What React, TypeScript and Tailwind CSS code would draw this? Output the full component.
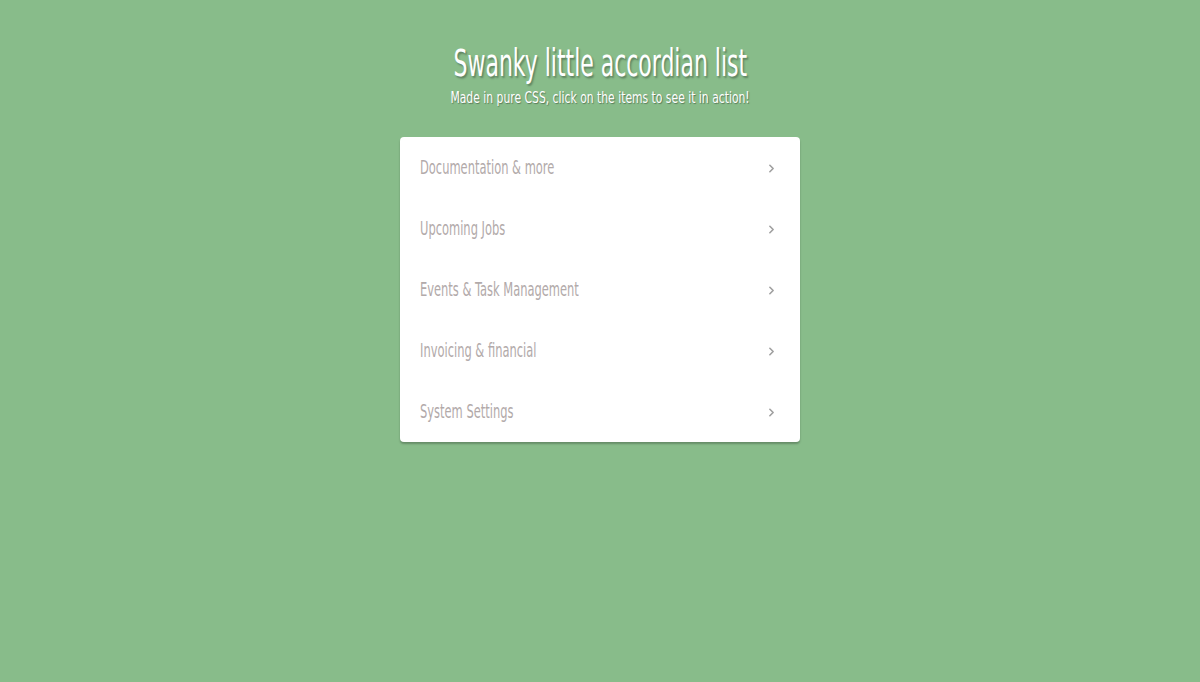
import { ChevronRight } from "lucide-react";

const items = [
  "Documentation & more",
  "Upcoming Jobs",
  "Events & Task Management",
  "Invoicing & financial",
  "System Settings",
];

export default function App() {
  return (
    <div className="min-h-[682px] w-full bg-[#88bc8a] font-['DejaVu_Sans_Condensed','DejaVu_Sans',sans-serif]">
      <div className="flex flex-col items-center pt-[42px]">
        <h1 className="text-[33px] leading-[42px] text-white [text-shadow:2px_2px_2px_rgba(0,0,0,0.3)] [transform:scale(0.74,1.15)]">
          Swanky little accordian list
        </h1>
        <p className="mt-[3px] text-[15px] leading-[20px] text-white [text-shadow:1px_1px_1px_rgba(0,0,0,0.35)] [transform:scale(0.8,1.1)]">
          Made in pure CSS, click on the items to see it in action!
        </p>
        <ul className="mt-[30px] w-[400px] rounded-[4px] bg-white shadow-[0_2px_2px_rgba(0,0,0,0.25)]">
          {items.map((label) => (
            <li
              key={label}
              className="flex h-[61px] items-center justify-between pl-5 pr-[22px] text-[#b2aaaa]"
            >
              <span className="inline-block origin-left text-[17px] [transform:scale(0.75,1.12)]">
                {label}
              </span>
              <ChevronRight className="h-[13px] w-[13px] translate-y-[1px] text-[#a0a0a0]" strokeWidth={3} />
            </li>
          ))}
        </ul>
      </div>
    </div>
  );
}
